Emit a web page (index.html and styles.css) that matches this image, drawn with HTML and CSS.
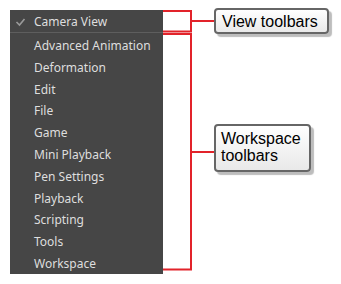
FILE: index.html
```html
<!DOCTYPE html>
<html lang="en">
<head>
  <meta charset="UTF-8">
  <meta name="viewport" content="width=device-width, initial-scale=1.0">
  <title>Toolbars menu</title>
  <link rel="stylesheet" href="styles.css">
</head>
<body>
  <div class="canvas">
    <ul class="menu">
      <li class="menu-item checked">
        <svg class="check" width="12" height="10" viewBox="0 0 12 10">
          <path d="M1.5 5 L4.5 8 L9.5 2" fill="none" stroke="#9a9a9a" stroke-width="1.6"/>
        </svg>
        Camera View
      </li>
      <li class="menu-sep"></li>
      <li class="menu-item">Advanced Animation</li>
      <li class="menu-item">Deformation</li>
      <li class="menu-item">Edit</li>
      <li class="menu-item">File</li>
      <li class="menu-item">Game</li>
      <li class="menu-item">Mini Playback</li>
      <li class="menu-item">Pen Settings</li>
      <li class="menu-item">Playback</li>
      <li class="menu-item">Scripting</li>
      <li class="menu-item">Tools</li>
      <li class="menu-item">Workspace</li>
    </ul>

    <!-- annotation brackets -->
    <svg class="brackets" width="341" height="284" viewBox="0 0 341 284">
      <g fill="none" stroke="#e2232a" stroke-width="2">
        <path d="M163 11 H191 V31.5 H163"/>
        <path d="M163 34 H191 V269.5 H163"/>
        <path d="M191 21 H214"/>
        <path d="M191 152 H214"/>
      </g>
    </svg>

    <div class="callout callout-view">View toolbars</div>
    <div class="callout callout-workspace">Workspace<br>toolbars</div>
  </div>
</body>
</html>
```

FILE: styles.css
```css
body {
  margin: 0;
  background-color: #fff;
}

.canvas {
  position: relative;
  width: 341px;
  height: 284px;
  padding: 10px 0 0 10px;
  box-sizing: border-box;
}

.menu {
  list-style: none;
  margin: 0;
  padding: 0;
  width: 153px;
  background-color: #464646;
  font-family: "Noto Sans", sans-serif;
  font-size: 12px;
  color: #dedede;
}

.menu-item {
  position: relative;
  height: 19.8px;
  line-height: 19.8px;
  padding: 2px 0 0 24px;
  white-space: nowrap;
}

.menu-item.checked {
  height: 20px;
  line-height: 20px;
}

.check {
  position: absolute;
  left: 5px;
  top: 7px;
}

.menu-sep {
  height: 1px;
  background-color: #5e5e5e;
  margin-bottom: 1px;
}

.brackets {
  position: absolute;
  left: 0;
  top: 0;
}

.callout {
  position: absolute;
  left: 214px;
  border: 2px solid #666;
  border-radius: 4px;
  background: linear-gradient(#fff, #e9e9e9);
  box-shadow: 3px 3px 1px #bdbdbd;
  font-family: "Liberation Sans", Arial, sans-serif;
  font-size: 16px;
  line-height: 17px;
  color: #000;
}

.callout-view {
  top: 8px;
  width: 98px;
  padding: 3px 7px 2px 6px;
}

.callout-workspace {
  top: 124px;
  width: 83px;
  padding: 4px 5px 6px 5px;
}
```
